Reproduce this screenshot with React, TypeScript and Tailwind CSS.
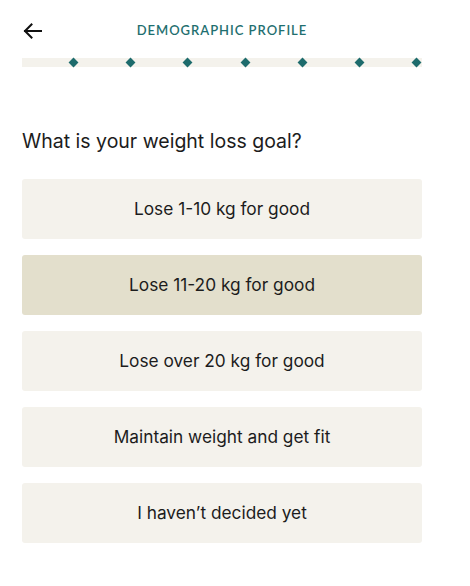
import React from "react";

const options = [
  "Lose 1-10 kg for good",
  "Lose 11-20 kg for good",
  "Lose over 20 kg for good",
  "Maintain weight and get fit",
  "I haven\u2019t decided yet",
];

export default function App() {
  return (
    <div className="w-[470px] h-[586px] bg-white text-[#1c1c1c]" style={{ fontFamily: "Inter, 'Noto Sans', sans-serif" }}>
      <div className="w-[400px] ml-[22px]">
        <div className="relative h-[58px] flex items-center justify-center pt-[4px]">
          <button className="absolute left-0 top-[21px] w-[20px] h-[20px] flex items-center justify-center">
            <svg width="19" height="16" viewBox="0 0 19 16" fill="none" stroke="#111" strokeWidth="2" strokeLinecap="square">
              <path d="M2 8H18" />
              <path d="M8.5 1.5L2 8l6.5 6.5" />
            </svg>
          </button>
          <span className="text-[13px] font-semibold tracking-[0.075em] text-[#1f6f70]" style={{ fontFamily: "Lato, sans-serif" }}>
            DEMOGRAPHIC PROFILE
          </span>
        </div>
        <div className="flex h-[9px] bg-[#f4f2ec]">
          {Array.from({ length: 7 }).map((_, i) => (
            <div key={i} className="flex-1 flex items-center justify-end pr-[2px]">
              <div className="w-[7px] h-[7px] rotate-45 bg-[#1d6b6c]" />
            </div>
          ))}
        </div>
        <h1 className="mt-[61px] text-[19.5px] leading-[26px] font-normal">What is your weight loss goal?</h1>
        <div className="mt-[25px] flex flex-col gap-[16px]">
          {options.map((o, i) => (
            <div
              key={o}
              className={`h-[60px] rounded-[3px] flex items-center justify-center text-[17.3px] ${i === 1 ? "bg-[#e3dfcc]" : "bg-[#f4f2ec]"}`}
            >
              {o}
            </div>
          ))}
        </div>
      </div>
    </div>
  );
}
